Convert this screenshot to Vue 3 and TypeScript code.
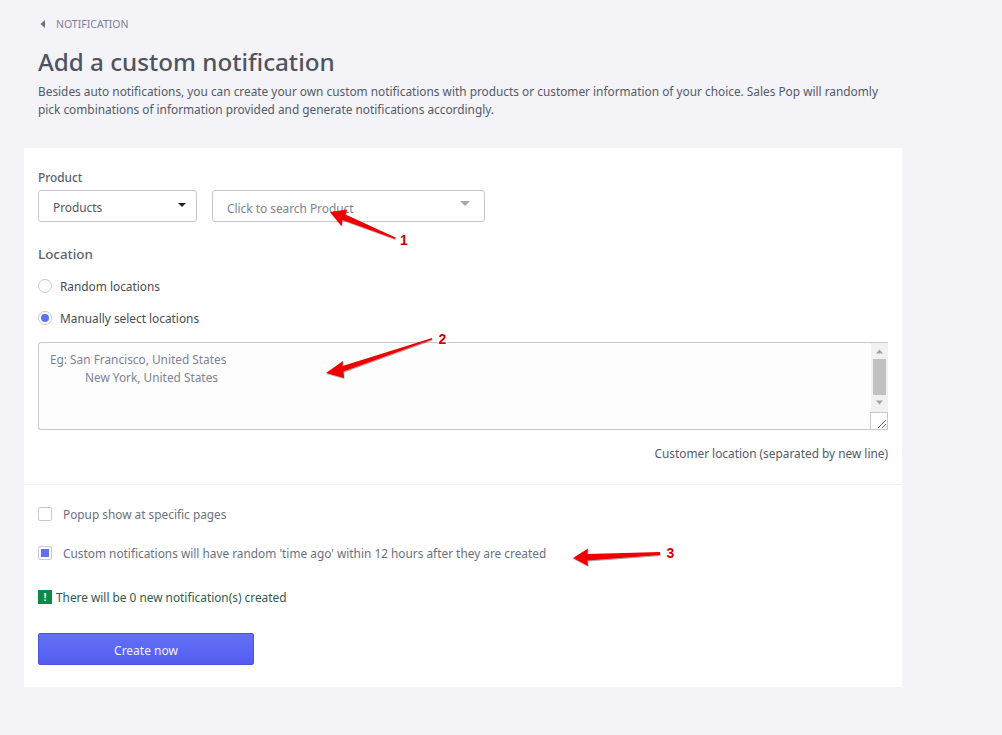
<script setup lang="ts">
const intro =
  'Besides auto notifications, you can create your own custom notifications with products or customer information of your choice. Sales Pop will randomly pick combinations of information provided and generate notifications accordingly.'
</script>

<template>
  <div class="page">
    <nav class="crumb">
      <svg class="crumb-icon" width="6" height="10" viewBox="0 0 6 10"><path d="M5 1v8L0.500 5z" fill="#6b7080" /></svg>
      <span>NOTIFICATION</span>
    </nav>
    <h1 class="title">Add a custom notification</h1>
    <p class="intro">{{ intro }}</p>

    <section class="card">
      <div class="upper">
        <div class="label">Product</div>
        <div class="product-row">
          <div class="select">
            <span>Products</span>
            <i class="caret dark"></i>
          </div>
          <div class="search">
            <span>Click to search Product</span>
            <i class="caret grey"></i>
          </div>
        </div>

        <div class="location">Location</div>
        <label class="radio-row"><i class="radio"></i>Random locations</label>
        <label class="radio-row"><i class="radio on"></i>Manually select locations</label>

        <div class="area">
          <div class="area-text">Eg: San Francisco, United States<br /><span class="indent">New York, United States</span></div>
          <div class="scrollbar">
            <svg width="17" height="16" viewBox="0 0 17 16"><path d="M5 10.500h7L8.500 6.500z" fill="#a3a3a3" /></svg>
            <div class="thumb"></div>
            <svg width="17" height="16" viewBox="0 0 17 16"><path d="M5 5.500h7L8.500 9.500z" fill="#a3a3a3" /></svg>
          </div>
          <div class="grip">
            <svg width="16" height="16" viewBox="0 0 16 16"><path d="M7 15l8-8M11 15l4-4" stroke="#666" fill="none" /></svg>
          </div>
        </div>
        <div class="hint">Customer location (separated by new line)</div>
      </div>

      <div class="lower">
        <label class="check-row"><i class="check"></i>Popup show at specific pages</label>
        <label class="check-row second"><i class="check on"></i>Custom notifications will have random 'time ago' within 12 hours after they are created</label>
        <div class="notice"><i class="bang">!</i>There will be 0 new notification(s) created</div>
        <button class="create" type="button">Create now</button>
      </div>
    </section>

    <svg class="marks" width="1002" height="735" viewBox="0 0 1002 735">
      <defs>
        <filter id="soft" x="-10%" y="-20%" width="120%" height="140%">
          <feDropShadow dx="0.500" dy="1" stdDeviation="0.700" flood-color="#000" flood-opacity="0.350" />
        </filter>
      </defs>
      <g filter="url(#soft)" fill="#ee0000">
        <path d="M330 212 L347 209.500 L345.500 214.500 L395.500 237.500 L395 239 L342.500 220 L341.500 226 Z" />
        <path d="M326 373 L343 361 L342.500 366 L432 338 L432 339.500 L343.500 371.500 L344 378 Z" />
        <path d="M573 558 L588 548.500 L587.500 554 L660 552 L660 555 L587.500 560.500 L588 566 Z" />
      </g>
      <text class="mark-num" x="404" y="245">1</text>
      <text class="mark-num" x="442.500" y="344">2</text>
      <text class="mark-num" x="670.500" y="558">3</text>
    </svg>
  </div>
</template>

<style>
html, body { margin: 0; background: #f3f3f8; }
</style>

<style scoped>
.page {
  position: relative;
  box-sizing: border-box;
  height: 735px;
  width: 1002px;
  overflow: hidden;
  padding: 16px 100px 0 24px;
  background: #f3f3f8;
  font-family: "Noto Sans", "Open Sans", sans-serif;
  font-size: 11.85px;
  color: #4f5563;
}
.crumb {
  display: flex;
  align-items: center;
  height: 16px;
  padding-left: 16px;
  font-size: 10.5px;
  color: #7d8296;
}
.crumb-icon { margin-right: 10px; }
.title {
  margin: 13px 0 0 14px;
  font-size: 24.2px;
  line-height: 34px;
  font-weight: 500;
  color: #4f5361;
}
.intro {
  margin: 3px 0 0 14px;
  width: 850px;
  line-height: 18px;
  color: #535a68;
}
.card {
  margin-top: 30px;
  background: #fff;
  width: 878px;
  height: 539px;
  box-sizing: border-box;
}
.upper {
  box-sizing: border-box;
  height: 337px;
  padding: 20px 14px 0;
  border-bottom: 1px solid #f1f1f5;
}
.label { line-height: 18px; font-weight: 500; color: #5b6170; }
.product-row { display: flex; gap: 15px; margin-top: 4px; }
.select, .search {
  box-sizing: border-box;
  height: 32px;
  display: flex;
  align-items: center;
  justify-content: space-between;
  background: #fff;
  border: 1px solid #c9c6dc;
  border-radius: 3px;
}
.select { width: 159px; padding: 1px 10px 0 14px; color: #4f5563; }
.search { width: 273px; padding: 3px 14px 0 14px; color: #7d8296; }
.caret { width: 0; height: 0; border-left: 4px solid transparent; border-right: 4px solid transparent; margin-top: -3px; }
.caret.dark { border-top: 4px solid #222; }
.caret.grey { border-top: 5px solid #a8a8a8; border-left-width: 5px; border-right-width: 5px; margin-top: -8px; }
.location { margin-top: 23px; font-size: 13.4px; line-height: 18px; font-weight: 500; color: #5b6170; }
.radio-row, .check-row { display: flex; align-items: center; line-height: 18px; }
.radio-row { margin-top: 14px; color: #454b59; }
.location + .radio-row { margin-top: 14px; }
.radio {
  box-sizing: border-box;
  width: 14px;
  height: 14px;
  margin-right: 8px;
  border-radius: 50%;
  border: 1px solid #c9c6dc;
  background: #fff;
  display: flex;
  align-items: center;
  justify-content: center;
}
.radio.on::after { content: ""; width: 8px; height: 8px; border-radius: 50%; background: #5f70f0; }
.area {
  position: relative;
  box-sizing: border-box;
  margin-top: 15px;
  height: 88px;
  width: 850px;
  display: flex;
  justify-content: space-between;
  background: #fdfdfd;
  border-top: 1px solid #c9c6dc;
  border-left: 1px solid #c9c6dc;
  border-bottom: 1px solid #c9c6dc;
  border-bottom-left-radius: 3px;
  border-top-left-radius: 3px;
}
.area-text { padding: 7px 11px; line-height: 18px; color: #7d8296; }
.indent { margin-left: 35px; }
.scrollbar {
  width: 17px;
  height: 69px;
  background: #f1f1f1;
  display: flex;
  flex-direction: column;
}
.scrollbar svg { display: block; }
.thumb { height: 36px; width: 13px; margin: 0 2px; background: #c1c1c1; }
.grip {
  position: absolute;
  right: 0;
  bottom: -1px;
  box-sizing: border-box;
  width: 18px;
  height: 18px;
  background: #fff;
  border: 1px solid #c9c9c9;
  border-bottom-color: #c9c6dc;
}
.grip svg { display: block; }
.hint { margin-top: 14px; text-align: right; line-height: 18px; color: #535a68; }
.lower { padding: 20px 14px 0; }
.check-row { color: #6b7080; }
.check-row.second { margin-top: 21px; }
.check {
  box-sizing: border-box;
  width: 14px;
  height: 14px;
  margin-right: 11px;
  border-radius: 2px;
  border: 1px solid #c9c6dc;
  background: #fff;
  display: flex;
  align-items: center;
  justify-content: center;
}
.check.on::after { content: ""; width: 8px; height: 8px; background: #5f70f0; }
.notice { display: flex; align-items: center; margin-top: 26px; line-height: 18px; color: #2f5a4e; }
.bang {
  width: 14px;
  height: 14px;
  margin-right: 4px;
  background: #0d8a45;
  color: #dff2e6;
  font-style: normal;
  font-weight: 700;
  font-size: 11px;
  line-height: 14px;
  text-align: center;
}
.create {
  display: block;
  margin-top: 27px;
  width: 216px;
  height: 32px;
  border: 1px solid #4a55d8;
  border-radius: 2px;
  background: linear-gradient(#6470f5, #525df0);
  color: #f1f2ff;
  font-family: inherit;
  font-size: 12px;
  padding: 2px 0 0;
}
.marks { position: absolute; left: 0; top: 0; pointer-events: none; }
.mark-num {
  font-family: "Liberation Sans", sans-serif;
  font-size: 14px;
  font-weight: 700;
  fill: #d40000;
  stroke: #fff;
  stroke-width: 2.500px;
  paint-order: stroke;
  text-anchor: middle;
}
</style>
